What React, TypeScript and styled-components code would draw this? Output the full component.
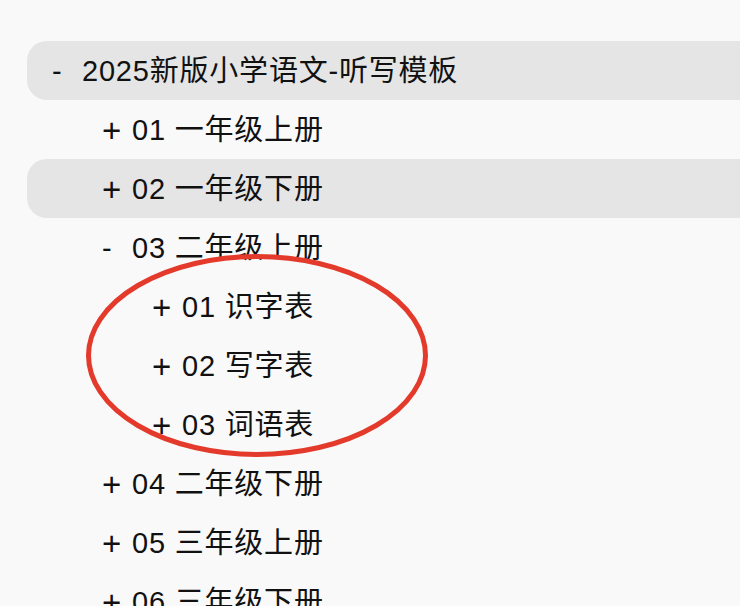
import React from 'react';
import styled, { createGlobalStyle } from 'styled-components';

const GlobalStyle = createGlobalStyle`
  html, body {
    margin: 0;
    padding: 0;
    background: #f9f9f9;
    overflow: hidden;
  }
`;

interface TreeNode {
  readonly label: string;
  readonly depth: number;
  readonly expanded: boolean;
  readonly highlighted?: boolean;
}

const nodes: TreeNode[] = [
  { label: '2025新版小学语文-听写模板', depth: 0, expanded: true, highlighted: true },
  { label: '01 一年级上册', depth: 1, expanded: false },
  { label: '02 一年级下册', depth: 1, expanded: false, highlighted: true },
  { label: '03 二年级上册', depth: 1, expanded: true },
  { label: '01 识字表', depth: 2, expanded: false },
  { label: '02 写字表', depth: 2, expanded: false },
  { label: '03 词语表', depth: 2, expanded: false },
  { label: '04 二年级下册', depth: 1, expanded: false },
  { label: '05 三年级上册', depth: 1, expanded: false },
  { label: '06 三年级下册', depth: 1, expanded: false },
];

const Page = styled.div`
  position: relative;
  width: 740px;
  height: 606px;
  overflow: hidden;
  background: #f9f9f9;
  padding: 41px 0 0 27px;
  box-sizing: border-box;
  font-family: 'Liberation Sans', 'Noto Sans CJK SC', sans-serif;
  color: #111;
`;

const TreeList = styled.ul`
  list-style: none;
  margin: 0 -60px 0 0;
  padding: 0;
  display: flex;
  flex-direction: column;
`;

interface RowProps {
  readonly $depth: number;
  readonly $highlighted: boolean;
}

const Row = styled.li<RowProps>`
  display: flex;
  align-items: center;
  height: 59px;
  padding-left: ${({ $depth }) => 25 + $depth * 50}px;
  border-radius: 20px;
  background: ${({ $highlighted }) => ($highlighted ? '#e5e5e5' : 'transparent')};
`;

const Line = styled.div`
  font-size: 29px;
  line-height: 40px;
  letter-spacing: 0.8px;
  white-space: nowrap;
`;

interface MarkerProps {
  readonly $expanded: boolean;
}

const Marker = styled.span<MarkerProps>`
  display: inline-block;
  width: 30px;
  font-size: ${({ $expanded }) => ($expanded ? '29px' : '33px')};
  line-height: 1;
  vertical-align: ${({ $expanded }) => ($expanded ? 'baseline' : '-2px')};
  letter-spacing: 0;
`;

const Label = styled.span``;

const Annotation = styled.svg`
  position: absolute;
  left: 83px;
  top: 251px;
  pointer-events: none;
`;

export default function App() {
  return (
    <Page>
      <GlobalStyle />
      <TreeList>
        {nodes.map((node, i) => (
          <Row key={i} $depth={node.depth} $highlighted={!!node.highlighted}>
            <Line>
              <Marker $expanded={node.expanded}>{node.expanded ? '-' : '+'}</Marker>
              <Label>{node.label}</Label>
            </Line>
          </Row>
        ))}
      </TreeList>
      <Annotation width="348" height="209" viewBox="0 0 348 209">
        <ellipse cx="174" cy="104.5" rx="168.5" ry="99" fill="none" stroke="#e33a2b" strokeWidth="5" />
      </Annotation>
    </Page>
  );
}
